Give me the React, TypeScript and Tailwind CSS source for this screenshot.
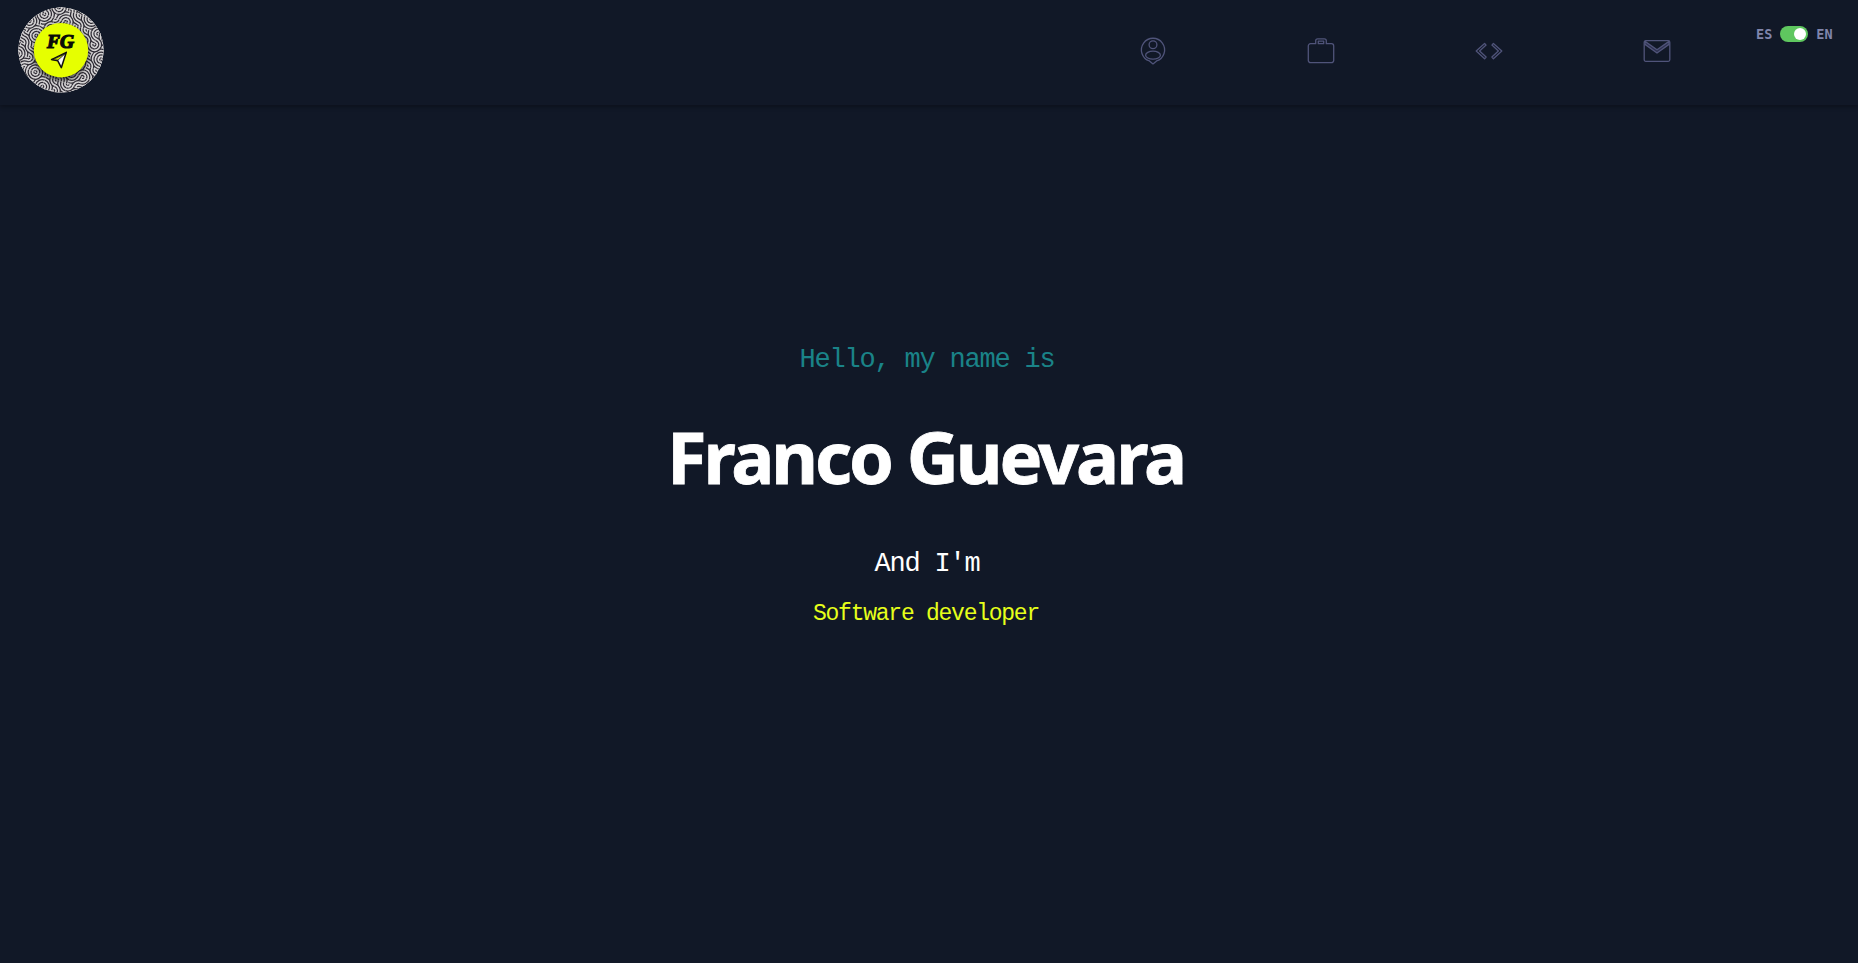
import React from "react";

const TILE = 10;

function Weave() {
  const tiles: React.ReactNode[] = [];
  for (let row = 0; row < 9; row++) {
    for (let col = 0; col < 9; col++) {
      const turn = ((row * 7 + col * 13 + row * col * 5 + ((row * row + col) % 3)) % 4) * 90;
      tiles.push(
        <g key={`${row}-${col}`} transform={`translate(${col * TILE} ${row * TILE}) rotate(${turn} 5 5)`}>
          <use href="#weave-tile" />
        </g>
      );
    }
  }
  return <g transform="rotate(20 43 43) translate(-8 -8) scale(1.15)">{tiles}</g>;
}

function Logo() {
  return (
    <svg width="86" height="86" viewBox="0 0 86 86" className="block">
      <defs>
        <clipPath id="ring">
          <circle cx="43" cy="43" r="42.6" />
        </clipPath>
        <clipPath id="cell">
          <rect width="10" height="10" />
        </clipPath>
        <filter id="soft" x="-20%" y="-20%" width="140%" height="140%">
          <feGaussianBlur stdDeviation="2" />
        </filter>
        <g id="weave-tile" clipPath="url(#cell)" fill="#d6d4d5" stroke="#2f2c35" strokeWidth="1.1">
          <rect width="10" height="10" stroke="none" />
          <circle cx="0" cy="0" r="8.75" />
          <circle cx="0" cy="0" r="6.25" />
          <circle cx="0" cy="0" r="3.75" />
          <circle cx="0" cy="0" r="1.25" />
          <circle cx="10" cy="10" r="6.25" />
          <circle cx="10" cy="10" r="3.75" />
          <circle cx="10" cy="10" r="1.25" />
        </g>
      </defs>
      <g clipPath="url(#ring)">
        <rect width="86" height="86" fill="#dddbdc" />
        <Weave />
        <circle cx="43" cy="45.5" r="28" fill="#000" opacity=".6" filter="url(#soft)" />
      </g>
      <circle cx="43" cy="43.2" r="27.2" fill="#e6ff00" />
      <text
        x="42.6"
        y="40.6"
        textAnchor="middle"
        textLength="27"
        lengthAdjust="spacingAndGlyphs"
        fill="#0b0b08"
        stroke="#0b0b08"
        strokeWidth="1.2"
        className="font-['Liberation_Serif',serif] text-[18px] font-bold italic"
      >
        FG
      </text>
      <path d="M48.300 45.300 33.500 52.600l6.300 1.200 3.500 6.900z" fill="#f7f7f7" stroke="#111" strokeWidth="1.5" strokeLinejoin="round" />
      <path d="M46.800 47 34.500 52.700l5.500.4z" fill="#d3ea00" stroke="#111" strokeWidth=".8" strokeLinejoin="round" />
    </svg>
  );
}

function NavIcon({ label, children }: { label: string; children: React.ReactNode }) {
  return (
    <a href="#" aria-label={label} className="flex w-[168px] justify-center">
      <svg width="30" height="30" viewBox="0 0 30 30" fill="none" stroke="#50547a" strokeWidth="1.3" strokeLinejoin="round">
        {children}
      </svg>
    </a>
  );
}

export default function App() {
  return (
    <div className="flex h-screen flex-col overflow-hidden bg-[#111827]">
      <header className="flex h-[105px] shrink-0 items-start justify-between pl-[18px] shadow-[0_2px_4px_rgba(0,0,0,0.3)]">
        <div className="pt-[6.500px]">
          <Logo />
        </div>
        <div className="flex">
          <nav className="flex pt-9">
            <NavIcon label="About">
              <path d="M15 27.900l-3.600-3a11.600 11.600 0 1 1 7.200 0z" />
              <circle cx="15" cy="8.800" r="3.900" />
              <ellipse cx="15" cy="19.200" rx="7.400" ry="4" />
            </NavIcon>
            <NavIcon label="Work">
              <path d="M4.500 7.700h5.200V4.800a2 2 0 0 1 2-2h6.600a2 2 0 0 1 2 2v2.900h5.200a2.200 2.200 0 0 1 2.200 2.200v14.600a2.200 2.200 0 0 1-2.200 2.200h-21a2.200 2.200 0 0 1-2.200-2.200V9.900a2.200 2.200 0 0 1 2.200-2.200z" />
              <path d="M12.300 5.200h5.400v2.500h-5.400z" />
            </NavIcon>
            <NavIcon label="Skills">
              <path d="M10.600 7.400 2.200 15l8.400 7.800 1.500-1.800L5.600 15l6.500-5.900z" />
              <path d="m19.400 7.400 8.400 7.600-8.400 7.800-1.500-1.800 6.500-6-6.500-5.900z" />
            </NavIcon>
            <NavIcon label="Contact">
              <rect x="2.200" y="4.700" width="25.600" height="20.600" rx="1.500" />
              <path d="M3 5.400 15 13.800 27 5.400v3L15 17 3 8.400z" fill="#2d3150" />
            </NavIcon>
          </nav>
          <div className="mt-[22px] flex h-6 w-[117px] items-center pl-[15px] font-['DejaVu_Sans_Mono',monospace] text-[13.500px] font-bold text-[#8085ab]">
            <span>ES</span>
            <button aria-label="Language" className="mx-2 flex h-4 w-7 shrink-0 items-center justify-end rounded-full bg-[#5fc75f] pr-[2px]">
              <span className="size-3 rounded-full bg-white" />
            </button>
            <span>EN</span>
          </div>
        </div>
      </header>
      <main className="flex flex-col items-center pt-[237px] pr-[4px] font-['Liberation_Mono',monospace]">
        <p className="text-[27px] leading-9 tracking-[-1.2px] text-[#1a8388]">Hello, my name is</p>
        <h1 className="mt-[42px] pr-[3px] font-['Noto_Sans',sans-serif] text-[72px] font-bold leading-[72px] tracking-[-3.05px] text-white [-webkit-text-stroke:0.800px_white]">
          Franco Guevara
        </h1>
        <p className="mt-[54px] text-[27px] leading-9 tracking-[-1.2px] text-white">And I'm</p>
        <p className="mt-[16px] pr-[2px] text-[23px] leading-8 tracking-[-1.25px] text-[#e6ff1a]">Software developer</p>
      </main>
    </div>
  );
}
